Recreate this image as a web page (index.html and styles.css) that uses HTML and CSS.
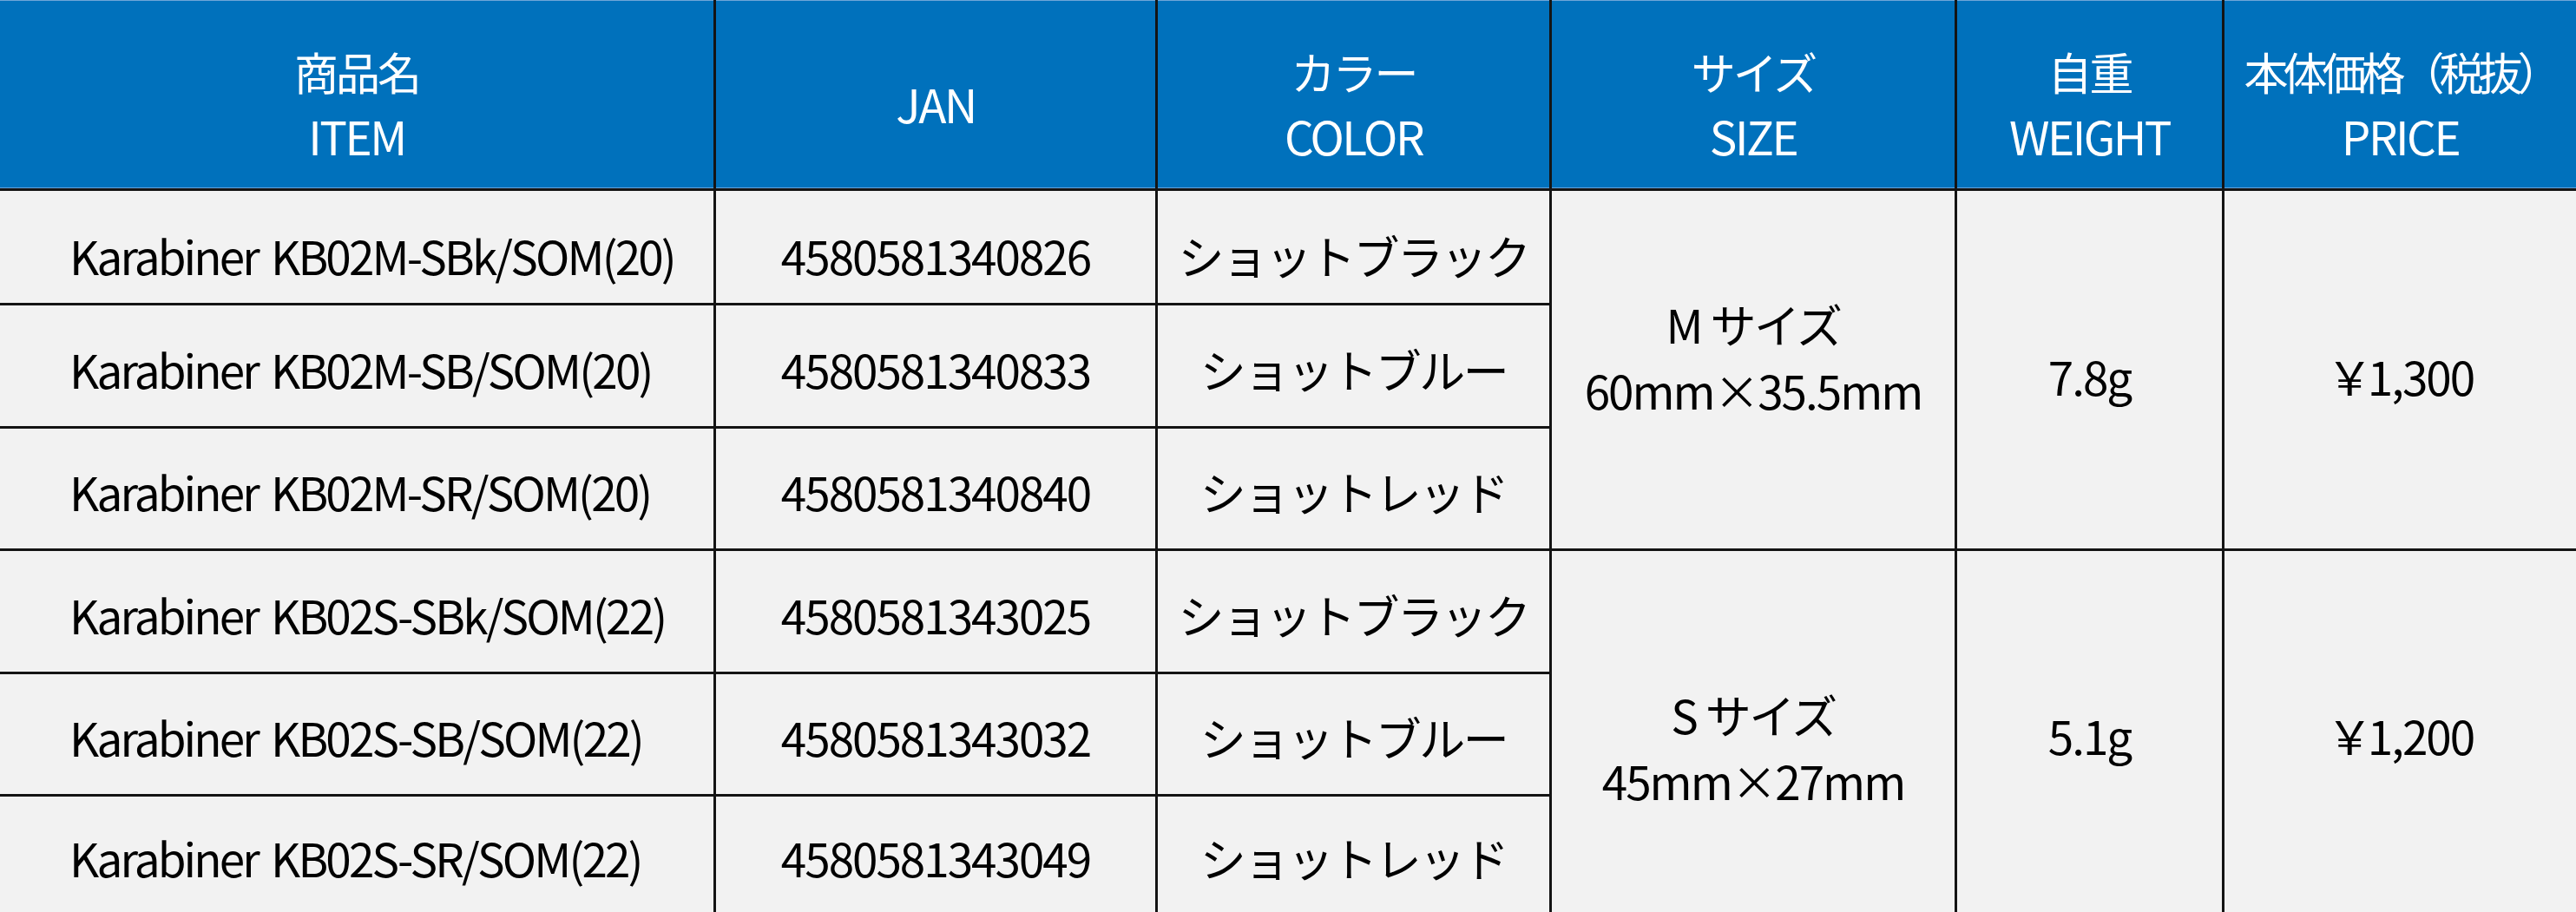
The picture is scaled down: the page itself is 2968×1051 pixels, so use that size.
FILE: index.html
```html
<!DOCTYPE html>
<html lang="ja">
<head>
<meta charset="utf-8">
<title>Karabiner KB02</title>
<link rel="stylesheet" href="styles.css">
</head>
<body>
<div class="table">
  <div class="th"><span class="ja">商品名</span><span>ITEM</span></div>
  <div class="th"><span>JAN</span></div>
  <div class="th"><span class="ja">カラー</span><span>COLOR</span></div>
  <div class="th"><span class="ja">サイズ</span><span>SIZE</span></div>
  <div class="th"><span class="ja">自重</span><span>WEIGHT</span></div>
  <div class="th"><span class="ja tight">本体価格（税抜）</span><span>PRICE</span></div>

  <div class="td item first">Karabiner KB02M-SBk/SOM(20)</div>
  <div class="td first">4580581340826</div>
  <div class="td first kana">ショットブラック</div>
  <div class="td span3 size-m"><span>M <span class="kana">サイズ</span></span><span>60mm<span class="kana">×</span>35.5mm</span></div>
  <div class="td span3 val-m">7.8g</div>
  <div class="td span3 val-m"><span><span class="yen">￥</span>1,300</span></div>

  <div class="td item">Karabiner KB02M-SB/SOM(20)</div>
  <div class="td">4580581340833</div>
  <div class="td kana">ショットブルー</div>

  <div class="td item">Karabiner KB02M-SR/SOM(20)</div>
  <div class="td">4580581340840</div>
  <div class="td kana">ショットレッド</div>

  <div class="td item">Karabiner KB02S-SBk/SOM(22)</div>
  <div class="td">4580581343025</div>
  <div class="td kana">ショットブラック</div>
  <div class="td span3 size-s"><span>S <span class="kana">サイズ</span></span><span>45mm<span class="kana">×</span>27mm</span></div>
  <div class="td span3 val-s">5.1g</div>
  <div class="td span3 val-s"><span><span class="yen">￥</span>1,200</span></div>

  <div class="td item">Karabiner KB02S-SB/SOM(22)</div>
  <div class="td">4580581343032</div>
  <div class="td kana">ショットブルー</div>

  <div class="td item">Karabiner KB02S-SR/SOM(22)</div>
  <div class="td">4580581343049</div>
  <div class="td kana">ショットレッド</div>
</div>
</body>
</html>
```

FILE: styles.css
```css
html, body {
  margin: 0;
  padding: 0;
  background: #f2f2f2;
}
body {
  width: 2968px;
  height: 1051px;
  overflow: hidden;
  font-family: "Noto Sans CJK JP", sans-serif;
}
.table {
  display: grid;
  grid-template-columns: 822px 506px 451px 464px 305px 405px;
  grid-template-rows: 217px 129px 139px 138px 139px 138px 133px;
  gap: 3px;
  background: #141414;
  width: 2968px;
  height: 1051px;
}
.th {
  background: #0071bc;
  color: #fff;
  display: flex;
  flex-direction: column;
  align-items: center;
  justify-content: center;
  box-sizing: border-box;
  border-top: 1px solid #6fa6d8;
  border-bottom: 1px solid #62a2dc;
  padding-top: 20px;
  font-size: 53px;
  line-height: 74px;
  letter-spacing: -2.5px;
}
.th .ja {
  font-size: 51px;
  letter-spacing: -3px;
}
.th .ja.tight {
  letter-spacing: -6px;
}
.td {
  background: #f2f2f2;
  color: #000;
  display: flex;
  flex-direction: column;
  align-items: center;
  justify-content: center;
  box-sizing: border-box;
  font-size: 53px;
  line-height: 64px;
  padding-top: 6px;
  white-space: nowrap;
  letter-spacing: -2px;
}
.td.first {
  padding-top: 19px;
}
.td.item {
  align-items: flex-start;
  padding-left: 80px;
  letter-spacing: -2.85px;
  word-spacing: 6px;
}
.kana {
  letter-spacing: -2.5px;
}
.span3 {
  grid-row: span 3;
}
.size-m, .size-s {
  line-height: 76px;
}
.size-m {
  padding-top: 0;
  padding-bottom: 30px;
}
.size-s {
  padding-top: 36px;
}
.val-m {
  padding-top: 14px;
}
.val-s {
  padding-top: 8px;
}
.yen {
  letter-spacing: -6px;
}
```
